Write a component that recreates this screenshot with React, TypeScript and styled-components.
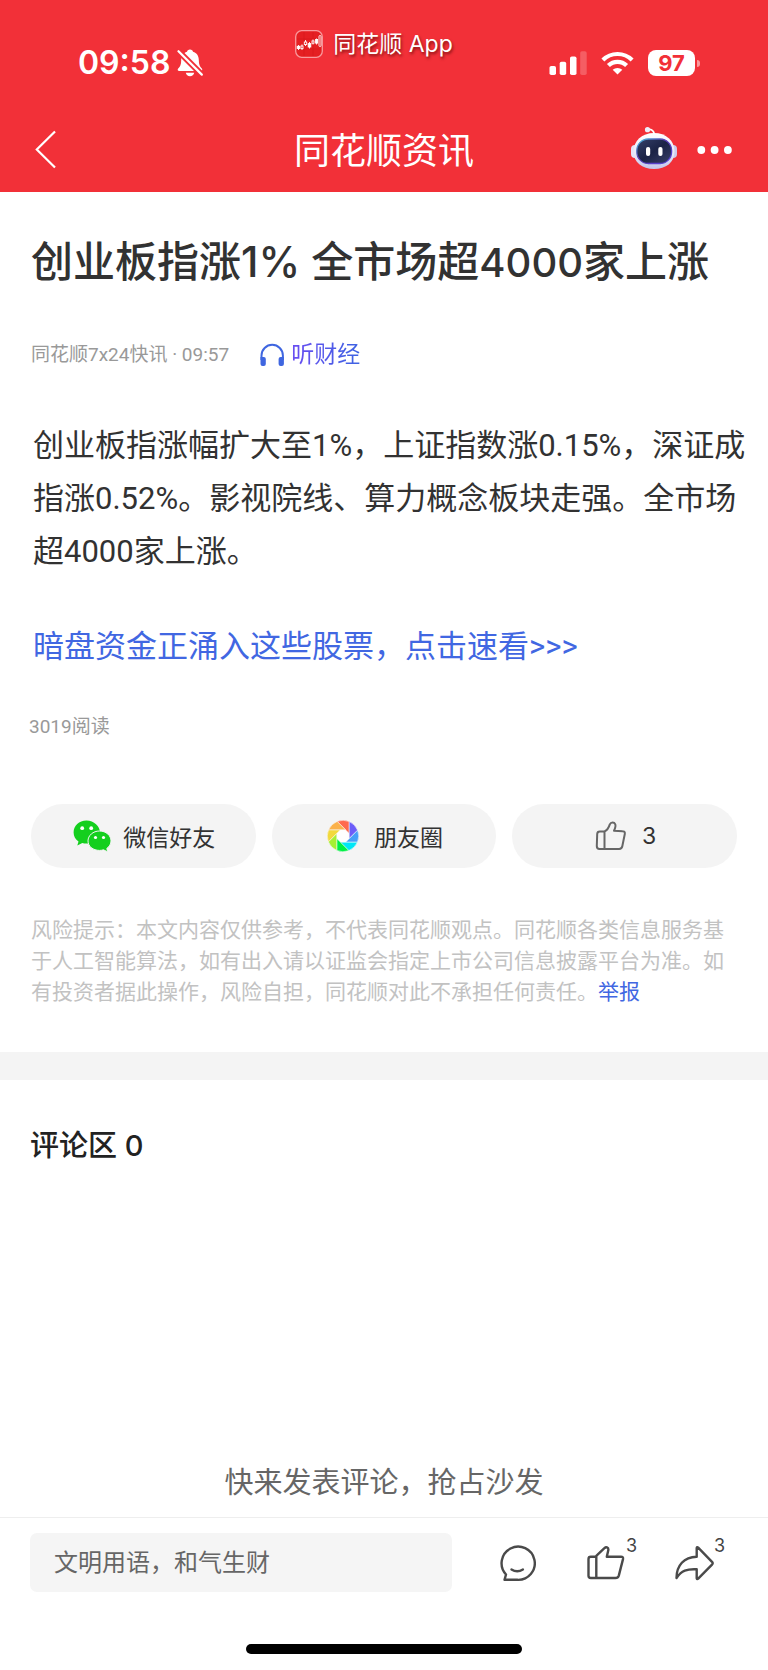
import React from "react";
import styled, { createGlobalStyle } from "styled-components";

const GlobalStyle = createGlobalStyle`
  *, *::before, *::after { box-sizing: border-box; }
  html, body { margin: 0; padding: 0; background: #fff; }
  body {
    color: #323232;
    font-family: Roboto, "Noto Sans CJK SC", sans-serif;
    -webkit-font-smoothing: antialiased;
  }
  h1, h2, p { margin: 0; font-weight: inherit; }
  a { color: #4167e2; text-decoration: none; }
  button { border: 0; padding: 0; background: none; color: inherit; font: inherit; cursor: pointer; }
  svg { display: block; flex: none; }
`;

const Page = styled.div`
  display: flex;
  flex-direction: column;
  min-height: 100vh;
`;

const Header = styled.header`
  background: #f23038;
  color: #fff;
  padding-bottom: 8px;
`;

const StatusBar = styled.div`
  display: grid;
  grid-template-columns: 1fr auto 1fr;
  height: 116px;
  padding: 28px 68px 0 48px;
`;

const Clock = styled.div`
  display: flex;
  align-items: center;
  gap: 7px;
  height: 70px;
  padding-left: 30px;
  font: 600 32px/40px Inter, sans-serif;
`;

const SourceApp = styled.div`
  display: flex;
  align-items: center;
  gap: 10px;
  height: 32px;
  font: 400 23px/32px Inter, "Noto Sans CJK SC", sans-serif;
  text-shadow: 1px 2px 3px rgba(70, 0, 0, 0.65);
`;

const Indicators = styled.div`
  display: flex;
  align-items: center;
  justify-content: flex-end;
  gap: 14px;
  height: 70px;
`;

const Battery = styled.div`
  display: flex;
  align-items: center;
  gap: 2px;
`;

const BatteryLevel = styled.span`
  width: 47px;
  border-radius: 8px;
  background: #fff;
  color: #f23038;
  text-align: center;
  font: 700 22px/26px Inter, sans-serif;
`;

const BatteryTip = styled.span`
  width: 3px;
  height: 7px;
  border-radius: 0 3px 3px 0;
  background: rgba(255, 255, 255, 0.5);
`;

const NavBar = styled.nav`
  display: grid;
  grid-template-columns: 1fr auto 1fr;
  align-items: center;
  height: 68px;
  padding: 0 35px;
`;

const NavTitle = styled.div`
  padding-top: 3px;
  font-size: 36px;
  line-height: 52px;
`;

const NavActions = styled.div`
  display: flex;
  align-items: center;
  justify-content: flex-end;
  gap: 19px;
`;

const Article = styled.article`
  padding: 40px 31px 44px;
`;

const Headline = styled.h1`
  font: 500 42px/60px Inter, "Noto Sans CJK SC", sans-serif;
`;

const Figure = styled.span`
  font-size: 40px;
`;

const Meta = styled.div`
  display: flex;
  align-items: center;
  gap: 30px;
  margin-top: 44px;
  color: #999;
  font-size: 19px;
  line-height: 32px;
`;

const ListenButton = styled.button`
  display: flex;
  align-items: center;
  gap: 6px;
  font-size: 23px;
  line-height: 36px;
`;

const ListenLabel = styled.span`
  background: linear-gradient(90deg, #6a4df2, #3d63e2);
  background-clip: text;
  color: transparent;
`;

const Body = styled.div`
  display: grid;
  gap: 42px;
  margin: 46px -10px 0 2px;
  font-size: 31px;
  line-height: 53px;
`;

const Reads = styled.div`
  margin: 40px 0 0 -2px;
  color: #999;
  font-size: 19px;
  line-height: 28px;
`;

const ShareRow = styled.div`
  display: grid;
  grid-template-columns: repeat(3, 1fr);
  gap: 16px;
  margin-top: 63px;
`;

const Pill = styled.button<{ $gap: number }>`
  display: flex;
  align-items: center;
  justify-content: center;
  gap: ${(p) => p.$gap}px;
  height: 64px;
  padding-left: 2px;
  border-radius: 32px;
  background: #f4f4f4;
  font-size: 23px;
`;

const Count = styled.span`
  font: 400 23px/32px Inter, sans-serif;
`;

const Disclaimer = styled.p`
  margin-top: 47px;
  color: #c2c2c2;
  font-size: 21px;
  line-height: 31px;
`;

const ReportLink = styled.a`
  display: inline-block;
`;

const Comments = styled.section`
  display: flex;
  flex: 1;
  flex-direction: column;
  justify-content: space-between;
  padding: 44px 30px 12px;
  border-top: 28px solid #f4f4f4;
`;

const CommentsTitle = styled.h2`
  font: 500 29px/44px Inter, "Noto Sans CJK SC", sans-serif;
  color: #222;
`;

const EmptyNote = styled.p`
  color: #666;
  font-size: 29px;
  line-height: 44px;
  text-align: center;
`;

const Footer = styled.footer`
  border-top: 1px solid #eee;
  padding-bottom: 16px;
`;

const ActionBar = styled.div`
  display: grid;
  grid-template-columns: 1fr 88px 88px 64px;
  align-items: center;
  padding: 15px 30px 0;
`;

const CommentInput = styled.input`
  height: 59px;
  min-width: 0;
  margin-right: 46px;
  padding: 0 24px;
  border: 0;
  border-radius: 7px;
  background: #f5f5f5;
  font: 400 24px/36px Roboto, "Noto Sans CJK SC", sans-serif;
  &::placeholder { color: #666; opacity: 1; }
`;

const ActionButton = styled.button`
  position: relative;
  justify-self: start;
`;

const ActionCount = styled.span`
  position: absolute;
  left: 100%;
  top: -10px;
  color: #444;
  font: 400 18px/24px Inter, sans-serif;
`;

const HomeIndicator = styled.div`
  width: 36%;
  height: 10px;
  margin: 52px auto 0;
  border-radius: 5px;
  background: #000;
`;

const BellOff = () => (
  <svg width="26" height="28" viewBox="0 0 26 28" fill="#fff" aria-hidden="true">
    <path d="M13 .5c1.7 0 2.7 1 3 2.2 3.900 1.200 5.800 4.300 5.800 8.300 0 4.500 1 6.500 3 8.400.900.900.500 2.600-1 2.600H2.300C.7 22 .2 20.400 1.200 19.400c2-1.900 3-4 3-8.400 0-4 2-7.100 5.800-8.300.300-1.200 1.300-2.200 3-2.200z" />
    <path d="M8.800 23.700h8.400c-.5 2.200-2 3.500-4.200 3.500s-3.700-1.300-4.200-3.500z" />
    <path d="M.5 1.200 25.500 26.300" stroke="#f23038" strokeWidth="6" />
    <path d="M1.500 2.200 24.800 25.600" stroke="#fff" strokeWidth="2.200" strokeLinecap="round" />
  </svg>
);

const AppLogo = () => (
  <svg width="28" height="28" viewBox="0 0 28 28" aria-hidden="true">
    <rect x=".7" y=".7" width="26.600" height="26.600" rx="6" fill="#e51f22" stroke="#f9999c" strokeWidth="1.300" />
    <path d="M2 9h24M2 19h24M9 2v24M18 2v24" stroke="#d5181b" strokeWidth=".6" />
    <g stroke="#fff" strokeWidth=".9">
      <path d="M3.500 15v5M7 14.500v5.500M10.500 10v6M14.500 12v6.500M18 9.500v5M21.500 8.500v6" />
      <rect x="2.200" y="16.300" width="2.600" height="2.200" fill="#fff" />
      <rect x="6" y="16" width="2" height="2.600" fill="#e51f22" />
      <rect x="9.300" y="12" width="2.400" height="2.500" fill="#e51f22" />
      <rect x="13.200" y="13.600" width="2.600" height="3.400" fill="#fff" />
      <rect x="17" y="11" width="2" height="2.200" fill="#e51f22" />
      <rect x="20.600" y="9.500" width="2" height="3.600" fill="#fff" />
      <rect x="24" y="5.500" width="2" height="11" rx="1" fill="#e51f22" />
    </g>
  </svg>
);

const Signal = () => (
  <svg width="38" height="24" viewBox="0 0 38 24" fill="#fff" aria-hidden="true">
    <rect x=".5" y="15" width="6.500" height="9" rx="1.800" />
    <rect x="10.700" y="10.700" width="6.500" height="13.300" rx="1.800" />
    <rect x="21" y="5.500" width="6.500" height="18.500" rx="1.800" />
    <rect x="31.200" y=".3" width="6.500" height="23.700" rx="1.800" opacity=".22" />
  </svg>
);

const Wifi = () => (
  <svg width="33" height="24" viewBox="0 0 33 24" fill="none" stroke="#fff" strokeWidth="4.200" aria-hidden="true">
    <path d="M1.900 9a20.800 20.800 0 0 1 29.200 0" />
    <path d="M7.400 14.600a12.800 12.800 0 0 1 18.200 0" />
    <path d="M11.700 18.800a7 7 0 0 1 9.600 0L16.500 23.600z" fill="#fff" stroke="none" />
  </svg>
);

const BackIcon = () => (
  <svg width="22" height="40" viewBox="0 0 22 40" fill="none" stroke="#fff" strokeWidth="2.200" aria-hidden="true">
    <path d="M20 1.500 1.800 19.500 20 37.500" />
  </svg>
);

const RobotIcon = () => (
  <svg width="48" height="48" viewBox="0 0 48 48" aria-hidden="true">
    <defs>
      <linearGradient id="shell" x1="0" y1="0" x2="0" y2="1">
        <stop offset="0" stopColor="#fff" />
        <stop offset=".6" stopColor="#e6e6f8" />
        <stop offset="1" stopColor="#c3c5ea" />
      </linearGradient>
      <linearGradient id="rim" x1="0" y1="0" x2="1" y2="1">
        <stop offset="0" stopColor="#49c5de" />
        <stop offset=".4" stopColor="#5c40b4" />
        <stop offset="1" stopColor="#5540d8" />
      </linearGradient>
      <linearGradient id="screen" x1="0" y1="0" x2="1" y2="1">
        <stop offset="0" stopColor="#35406a" />
        <stop offset=".5" stopColor="#1b2346" />
        <stop offset="1" stopColor="#394069" />
      </linearGradient>
    </defs>
    <path d="M17.500 4c3-1.300 6-.2 6.800 4" fill="none" stroke="#fff" strokeWidth="1.800" />
    <circle cx="17.500" cy="3.700" r="2.600" fill="#eeeefa" />
    <rect x="1" y="19" width="8" height="13" rx="4" fill="#e3e3f8" />
    <rect x="39" y="19" width="8" height="13" rx="4" fill="#cccded" />
    <path d="M24 7C36 7 44.500 14.500 44.500 25.500S36 43 24 43 3.500 36 3.500 25.500 12 7 24 7z" fill="url(#shell)" />
    <rect x="6.800" y="13" width="34.800" height="24.500" rx="11.500" fill="url(#screen)" stroke="url(#rim)" strokeWidth="1.300" />
    <rect x="16" y="21" width="4.200" height="9" rx="2" fill="#fff" />
    <rect x="28.300" y="21" width="4.200" height="9" rx="2" fill="#fff" />
  </svg>
);

const MoreIcon = () => (
  <svg width="36" height="10" viewBox="0 0 36 10" fill="#fff" aria-hidden="true">
    <circle cx="4.300" cy="5" r="3.900" />
    <circle cx="17.600" cy="5" r="3.900" />
    <circle cx="30.900" cy="5" r="3.900" />
  </svg>
);

const Headphones = () => (
  <svg width="26" height="24" viewBox="0 0 26 24" aria-hidden="true">
    <path d="M2.500 17v-4.500a10.700 10.700 0 0 1 21.400 0V17" fill="none" stroke="#3f66e0" strokeWidth="2" />
    <path d="M1.500 14h3.300a2 2 0 0 1 2 2v5a2 2 0 0 1-2 2H3.500a2 2 0 0 1-2-2zM24.900 14h-3.300a2 2 0 0 0-2 2v5a2 2 0 0 0 2 2h1.300a2 2 0 0 0 2-2z" fill="#3f66e0" />
  </svg>
);

const WeChatIcon = () => (
  <svg width="40" height="34" viewBox="0 0 40 34" fill="#14cf1e" aria-hidden="true">
    <path d="M13.500 1.500C6 1.500 .6 6.800 .6 13.500c0 3.800 1.900 6.900 4.900 9L4.300 26.500l5-2.500c1.300.4 2.800.600 4.200.6C21 24.600 27 19.800 27 13.500S21 1.500 13.500 1.500z" />
    <path d="M26.500 12c6.500 0 11.500 4.400 11.500 9.900 0 3-1.600 5.700-4.200 7.500l.900 3.500-4.200-2.100c-1.300.4-2.600.6-4 .6-6.400 0-11.500-4.100-11.500-9.500s5.100-9.900 11.500-9.900z" stroke="#f4f4f4" strokeWidth="1" />
    <g fill="#fff">
      <circle cx="9.200" cy="9.200" r="1.900" />
      <circle cx="18.200" cy="9.200" r="1.900" />
      <circle cx="22.500" cy="18.500" r="1.600" />
      <circle cx="30.500" cy="18.500" r="1.600" />
    </g>
  </svg>
);

const BLADES = ["#ff6a4d", "#6c5cf8", "#469ff8", "#00e6f6", "#00f046", "#a6f033", "#f2d93c", "#fbb14a"];

const MomentsIcon = () => (
  <svg width="32" height="32" viewBox="-16 -16 32 32" aria-hidden="true">
    <circle r="14" fill="#fff" />
    {BLADES.map((color, i) => (
      <path
        key={color}
        d="M6.200-2.600V-14.400A15.700 15.700 0 0 0-5.800-14.600z"
        transform={`rotate(${i * 45})`}
        fill={color}
        stroke="#f8f8f8"
        strokeWidth=".5"
      />
    ))}
  </svg>
);

const PillThumb = () => (
  <svg width="32" height="32" viewBox="0 0 32 32" fill="none" stroke="#666" strokeWidth="2" strokeLinejoin="round" aria-hidden="true">
    <path d="M9.500 11.500H4.800Q2.300 11.500 2.200 14L1.800 26Q1.800 28.900 4.500 28.900H24.200Q26.800 28.900 27.300 26.300L29.800 14Q30.300 11.300 27.500 11.200L19 10.700C20.500 7.500 20.900 5.500 20.200 4.200 19.200 2 15.900 2 14.800 4.400 13.500 8.500 12.500 10.200 9.500 11.500V28.900" />
  </svg>
);

const BarThumb = () => (
  <svg width="40" height="38" viewBox="0 0 40 38" fill="none" stroke="#4a4a4a" strokeWidth="2.400" strokeLinejoin="round" aria-hidden="true">
    <path d="M10.300 12.800H4.800Q2.500 12.800 2.500 15V31.800Q2.500 34 4.800 34H29.500Q32 34 32.800 31.600L37 15.100Q37.500 12.700 35 12.700H20.800L22.400 5.800C22.500 3.200 20 2.500 18.400 4.200L10.300 11.800V34" />
  </svg>
);

const ChatSmile = () => (
  <svg width="38" height="38" viewBox="0 0 38 38" fill="none" stroke="#4a4a4a" strokeWidth="2.400" strokeLinejoin="round" strokeLinecap="round" aria-hidden="true">
    <path d="M19.300 35.800H6.500L8 30.500A16.600 16.600 0 1 1 19.300 35.800z" />
    <path d="M13.500 25.500q5.700 3.600 11.400 0" />
  </svg>
);

const ShareArrow = () => (
  <svg width="40" height="38" viewBox="0 0 40 38" fill="none" stroke="#4a4a4a" strokeWidth="2.400" strokeLinejoin="round" aria-hidden="true">
    <path d="M2.500 34C2.500 21.500 10 13 22.700 12.800V4Q23 2.500 24.200 3.600L38 17.800Q39.300 19.200 38 20.600L24.200 34.700Q23 35.800 22.700 34.300V25.300C13 24.800 7.500 26.500 2.500 34z" />
  </svg>
);

export default function App() {
  return (
    <Page>
      <GlobalStyle />
      <Header>
        <StatusBar>
          <Clock>
            09:58
            <BellOff />
          </Clock>
          <SourceApp>
            <AppLogo />
            同花顺 App
          </SourceApp>
          <Indicators>
            <Signal />
            <Wifi />
            <Battery>
              <BatteryLevel>97</BatteryLevel>
              <BatteryTip />
            </Battery>
          </Indicators>
        </StatusBar>
        <NavBar>
          <button type="button" aria-label="返回">
            <BackIcon />
          </button>
          <NavTitle>同花顺资讯</NavTitle>
          <NavActions>
            <button type="button" aria-label="智能助手">
              <RobotIcon />
            </button>
            <button type="button" aria-label="更多">
              <MoreIcon />
            </button>
          </NavActions>
        </NavBar>
      </Header>

      <Article>
        <Headline>
          创业板指涨1% 全市场超<Figure>4000</Figure>家上涨
        </Headline>
        <Meta>
          <span>同花顺7x24快讯 · 09:57</span>
          <ListenButton type="button">
            <Headphones />
            <ListenLabel>听财经</ListenLabel>
          </ListenButton>
        </Meta>
        <Body>
          <p>创业板指涨幅扩大至1%，上证指数涨0.15%，深证成指涨0.52%。影视院线、算力概念板块走强。全市场超4000家上涨。</p>
          <p>
            <a href="#stocks">暗盘资金正涌入这些股票，点击速看&gt;&gt;&gt;</a>
          </p>
        </Body>
        <Reads>3019阅读</Reads>
        <ShareRow>
          <Pill type="button" $gap={10}>
            <WeChatIcon />
            微信好友
          </Pill>
          <Pill type="button" $gap={15}>
            <MomentsIcon />
            朋友圈
          </Pill>
          <Pill type="button" $gap={15} aria-label="点赞 3">
            <PillThumb />
            <Count>3</Count>
          </Pill>
        </ShareRow>
        <Disclaimer>
          风险提示：本文内容仅供参考，不代表同花顺观点。同花顺各类信息服务基于人工智能算法，如有出入请以证监会指定上市公司信息披露平台为准。如有投资者据此操作，风险自担，同花顺对此不承担任何责任。
          <ReportLink href="#report">举报</ReportLink>
        </Disclaimer>
      </Article>

      <Comments>
        <CommentsTitle>评论区 0</CommentsTitle>
        <EmptyNote>快来发表评论，抢占沙发</EmptyNote>
      </Comments>

      <Footer>
        <ActionBar>
          <CommentInput type="text" aria-label="发表评论" placeholder="文明用语，和气生财" />
          <ActionButton type="button" aria-label="评论">
            <ChatSmile />
          </ActionButton>
          <ActionButton type="button" aria-label="点赞 3">
            <BarThumb />
            <ActionCount>3</ActionCount>
          </ActionButton>
          <ActionButton type="button" aria-label="分享 3">
            <ShareArrow />
            <ActionCount>3</ActionCount>
          </ActionButton>
        </ActionBar>
        <HomeIndicator />
      </Footer>
    </Page>
  );
}
